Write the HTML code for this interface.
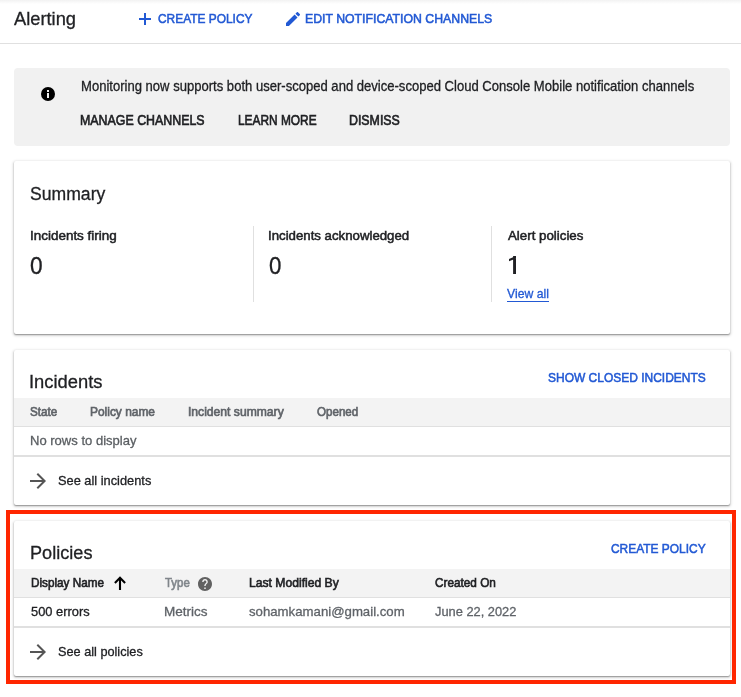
<!DOCTYPE html>
<html><head><meta charset="utf-8"><style>
*{box-sizing:border-box;margin:0;padding:0}
html,body{width:741px;height:697px;overflow:hidden;background:#fff;font-family:"Liberation Sans",sans-serif;color:#202124}
.t{position:absolute;white-space:nowrap;line-height:1;transform-origin:0 0}
.s{position:absolute}
.card{position:absolute;left:14px;width:716px;background:#fff;border-radius:2px;box-shadow:0 1px 1.5px 0 rgba(0,0,0,.36),0 1px 3px 1px rgba(0,0,0,.12)}
</style></head><body>

<div class="s" style="left:0;top:0;width:741px;height:4px;background:linear-gradient(#f2f2f2,#fff)"></div>
<div class="s" style="left:0;top:43px;width:741px;height:1px;background:#e0e0e0"></div>
<svg class="s" style="left:139px;top:13px" width="12" height="12" viewBox="0 0 12 12"><path d="M5 0h2v5h5v2H7v5H5V7H0V5h5z" fill="#2259d4"/></svg>
<svg class="s" style="left:286px;top:12px" width="14" height="14" viewBox="3 3 18 18"><path d="M3 17.25V21h3.75L17.81 9.94l-3.75-3.75L3 17.25zM20.71 7.04a1 1 0 0 0 0-1.410l-2.34-2.34a1 1 0 0 0-1.41 0l-1.83 1.83 3.75 3.75 1.83-1.83z" fill="#2259d4"/></svg>
<div class="s" style="left:14px;top:68px;width:716px;height:77.5px;background:#f1f1f1;border-radius:4px"></div>
<svg class="s" style="left:41px;top:87px" width="14" height="14" viewBox="0 0 14 14"><circle cx="7" cy="7" r="7" fill="#000"/><rect x="6" y="6" width="2" height="5" fill="#f1f1f1"/><rect x="6" y="3" width="2" height="2" fill="#f1f1f1"/></svg>
<div class="card" style="top:161px;height:173px"></div>
<div class="s" style="left:253px;top:226px;width:1px;height:76px;background:#e0e0e0"></div>
<div class="s" style="left:491px;top:226px;width:1px;height:76px;background:#e0e0e0"></div>
<svg class="s" style="left:508px;top:255px" width="10" height="20" viewBox="0 0 10 20"><path d="M1 4L7.9 1H8V3.5L1 6.2ZM5.1 1H8V19H5.1Z" fill="#202124"/></svg>
<div class="s" style="left:507px;top:301px;width:42px;height:1px;background:#2259d4"></div>
<div class="card" style="top:350px;height:155px"></div>
<div class="s" style="left:14px;top:398px;width:716px;height:29px;background:#f3f3f3;border-bottom:1px solid #e0e0e0"></div>
<div class="s" style="left:14px;top:455px;width:716px;height:2px;background:#e0e0e0"></div>
<svg class="s" style="left:30px;top:473px" width="16" height="16" viewBox="4 4 16 16"><path d="M12 4l-1.41 1.41L16.17 11H4v2h12.17l-5.58 5.59L12 20l8-8z" fill="#555"/></svg>
<div class="card" style="top:521px;height:155px"></div>
<div class="s" style="left:14px;top:569px;width:716px;height:29px;background:#f3f3f3;border-bottom:1px solid #e0e0e0"></div>
<svg class="s" style="left:108px;top:572px" width="24" height="24" viewBox="0 0 24 24"><path d="M12 5.8V18M6.9 10.9L12 5.8L17.1 10.9" stroke="#000" stroke-width="2.1" fill="none"/></svg>
<svg class="s" style="left:198px;top:577px" width="14" height="14" viewBox="2 2 20 20"><path d="M12 2C6.48 2 2 6.48 2 12s4.48 10 10 10 10-4.48 10-10S17.52 2 12 2zm1 17h-2v-2h2v2zm2.07-7.75l-.9.92C13.45 12.9 13 13.5 13 15h-2v-.5c0-1.1.45-2.1 1.17-2.83l1.24-1.26c.37-.36.59-.86.59-1.41 0-1.1-.9-2-2-2s-2 .9-2 2H8c0-2.21 1.79-4 4-4s4 1.79 4 4c0 .88-.36 1.68-.93 2.25z" fill="#616161"/></svg>
<div class="s" style="left:14px;top:626px;width:716px;height:2px;background:#e0e0e0"></div>
<svg class="s" style="left:30px;top:644px" width="16" height="16" viewBox="4 4 16 16"><path d="M12 4l-1.41 1.41L16.17 11H4v2h12.17l-5.58 5.59L12 20l8-8z" fill="#555"/></svg>
<div class="s" style="left:6px;top:510px;width:730px;height:174px;border:4px solid #ff2600"></div>
<div id="txt" style="position:absolute;left:0;top:0;width:741px;height:697px;will-change:transform">
<div id="alert" class="t" style="left:14.00px;top:8.72px;font-size:19px;font-weight:400;-webkit-text-stroke:0.30px #202124;color:#202124;transform:scaleX(0.9625);">Alerting</div>
<div id="cp1" class="t" style="left:158.00px;top:11.73px;font-size:13.2px;font-weight:400;-webkit-text-stroke:0.55px #2259d4;color:#2259d4;transform:scaleX(0.9038);">CREATE POLICY</div>
<div id="enc" class="t" style="left:304.87px;top:11.73px;font-size:13.2px;font-weight:400;-webkit-text-stroke:0.55px #2259d4;color:#2259d4;transform:scaleX(0.9315);">EDIT NOTIFICATION CHANNELS</div>
<div id="mon" class="t" style="left:81.05px;top:79.33px;font-size:14.5px;font-weight:400;-webkit-text-stroke:0.30px #202124;color:#202124;transform:scaleX(0.9004);">Monitoring now supports both user-scoped and device-scoped Cloud Console Mobile notification channels</div>
<div id="mc" class="t" style="left:80.33px;top:113.03px;font-size:14.5px;font-weight:400;-webkit-text-stroke:0.65px #202124;color:#202124;transform:scaleX(0.8545);">MANAGE CHANNELS</div>
<div id="lm" class="t" style="left:237.90px;top:113.03px;font-size:14.5px;font-weight:400;-webkit-text-stroke:0.65px #202124;color:#202124;transform:scaleX(0.8200);">LEARN MORE</div>
<div id="dis" class="t" style="left:348.51px;top:113.03px;font-size:14.5px;font-weight:400;-webkit-text-stroke:0.65px #202124;color:#202124;transform:scaleX(0.8525);">DISMISS</div>
<div id="sum" class="t" style="left:30.04px;top:183.75px;font-size:19.2px;font-weight:400;-webkit-text-stroke:0.30px #202124;color:#202124;transform:scaleX(0.9171);">Summary</div>
<div id="if" class="t" style="left:29.98px;top:228.80px;font-size:13px;font-weight:400;-webkit-text-stroke:0.50px #202124;color:#202124;transform:scaleX(1.0349);">Incidents firing</div>
<div id="n0a" class="t" style="left:30.07px;top:253.83px;font-size:24.3px;font-weight:400;-webkit-text-stroke:0.30px #202124;color:#202124;transform:scaleX(0.9333);">0</div>
<div id="ia" class="t" style="left:268.37px;top:228.80px;font-size:13px;font-weight:400;-webkit-text-stroke:0.50px #202124;color:#202124;transform:scaleX(1.0174);">Incidents acknowledged</div>
<div id="n0b" class="t" style="left:269.08px;top:253.83px;font-size:24.3px;font-weight:400;-webkit-text-stroke:0.30px #202124;color:#202124;transform:scaleX(0.9167);">0</div>
<div id="ap" class="t" style="left:507.62px;top:228.80px;font-size:13px;font-weight:400;-webkit-text-stroke:0.50px #202124;color:#202124;transform:scaleX(1.0230);">Alert policies</div>
<div id="va" class="t" style="left:507.00px;top:288.27px;font-size:12.2px;font-weight:400;-webkit-text-stroke:0.30px #2259d4;color:#2259d4;transform:scaleX(1.0024);">View all</div>
<div id="inc" class="t" style="left:29.25px;top:371.95px;font-size:19.2px;font-weight:400;-webkit-text-stroke:0.30px #202124;color:#202124;transform:scaleX(0.9573);">Incidents</div>
<div id="sci" class="t" style="left:548.46px;top:370.91px;font-size:13.1px;font-weight:400;-webkit-text-stroke:0.55px #2259d4;color:#2259d4;transform:scaleX(0.9152);">SHOW CLOSED INCIDENTS</div>
<div id="st" class="t" style="left:30.22px;top:405.50px;font-size:12.4px;font-weight:400;-webkit-text-stroke:0.65px #5f6368;color:#5f6368;transform:scaleX(0.9414);">State</div>
<div id="pn" class="t" style="left:90.21px;top:405.50px;font-size:12.4px;font-weight:400;-webkit-text-stroke:0.65px #5f6368;color:#5f6368;transform:scaleX(0.9627);">Policy name</div>
<div id="is" class="t" style="left:187.80px;top:405.50px;font-size:12.4px;font-weight:400;-webkit-text-stroke:0.65px #5f6368;color:#5f6368;transform:scaleX(0.9786);">Incident summary</div>
<div id="op" class="t" style="left:316.61px;top:405.50px;font-size:12.4px;font-weight:400;-webkit-text-stroke:0.65px #5f6368;color:#5f6368;transform:scaleX(0.9341);">Opened</div>
<div id="nr" class="t" style="left:30.00px;top:433.91px;font-size:13.1px;font-weight:400;-webkit-text-stroke:0.30px #5a5e62;color:#5a5e62;transform:scaleX(0.9953);">No rows to display</div>
<div id="sai" class="t" style="left:58.03px;top:473.57px;font-size:13.5px;font-weight:400;-webkit-text-stroke:0.30px #202124;color:#202124;transform:scaleX(0.9490);">See all incidents</div>
<div id="pol" class="t" style="left:29.66px;top:542.75px;font-size:19.2px;font-weight:400;-webkit-text-stroke:0.30px #202124;color:#202124;transform:scaleX(0.9446);">Policies</div>
<div id="cp2" class="t" style="left:611.42px;top:541.71px;font-size:13.1px;font-weight:400;-webkit-text-stroke:0.55px #2259d4;color:#2259d4;transform:scaleX(0.9117);">CREATE POLICY</div>
<div id="dn" class="t" style="left:30.61px;top:576.50px;font-size:12.4px;font-weight:400;-webkit-text-stroke:0.60px #202124;color:#202124;transform:scaleX(0.9468);">Display Name</div>
<div id="ty" class="t" style="left:165.15px;top:576.50px;font-size:12.4px;font-weight:400;-webkit-text-stroke:0.65px #80868b;color:#80868b;transform:scaleX(0.9222);">Type</div>
<div id="lmb" class="t" style="left:248.80px;top:576.50px;font-size:12.4px;font-weight:400;-webkit-text-stroke:0.60px #202124;color:#202124;transform:scaleX(0.9802);">Last Modified By</div>
<div id="co" class="t" style="left:435.40px;top:576.50px;font-size:12.4px;font-weight:400;-webkit-text-stroke:0.60px #202124;color:#202124;transform:scaleX(0.9508);">Created On</div>
<div id="e500" class="t" style="left:30.60px;top:604.91px;font-size:13.1px;font-weight:400;-webkit-text-stroke:0.30px #202124;color:#202124;transform:scaleX(0.9831);">500 errors</div>
<div id="met" class="t" style="left:163.77px;top:604.91px;font-size:13.1px;font-weight:400;-webkit-text-stroke:0.30px #5f6368;color:#5f6368;transform:scaleX(1.0341);">Metrics</div>
<div id="soh" class="t" style="left:248.79px;top:604.91px;font-size:13.1px;font-weight:400;-webkit-text-stroke:0.30px #5f6368;color:#5f6368;transform:scaleX(1.0078);">sohamkamani@gmail.com</div>
<div id="jun" class="t" style="left:435.39px;top:604.91px;font-size:13.1px;font-weight:400;-webkit-text-stroke:0.30px #5f6368;color:#5f6368;transform:scaleX(0.9807);">June 22, 2022</div>
<div id="sap" class="t" style="left:58.22px;top:644.57px;font-size:13.5px;font-weight:400;-webkit-text-stroke:0.30px #202124;color:#202124;transform:scaleX(0.9411);">See all policies</div>
</div>
</body></html>
